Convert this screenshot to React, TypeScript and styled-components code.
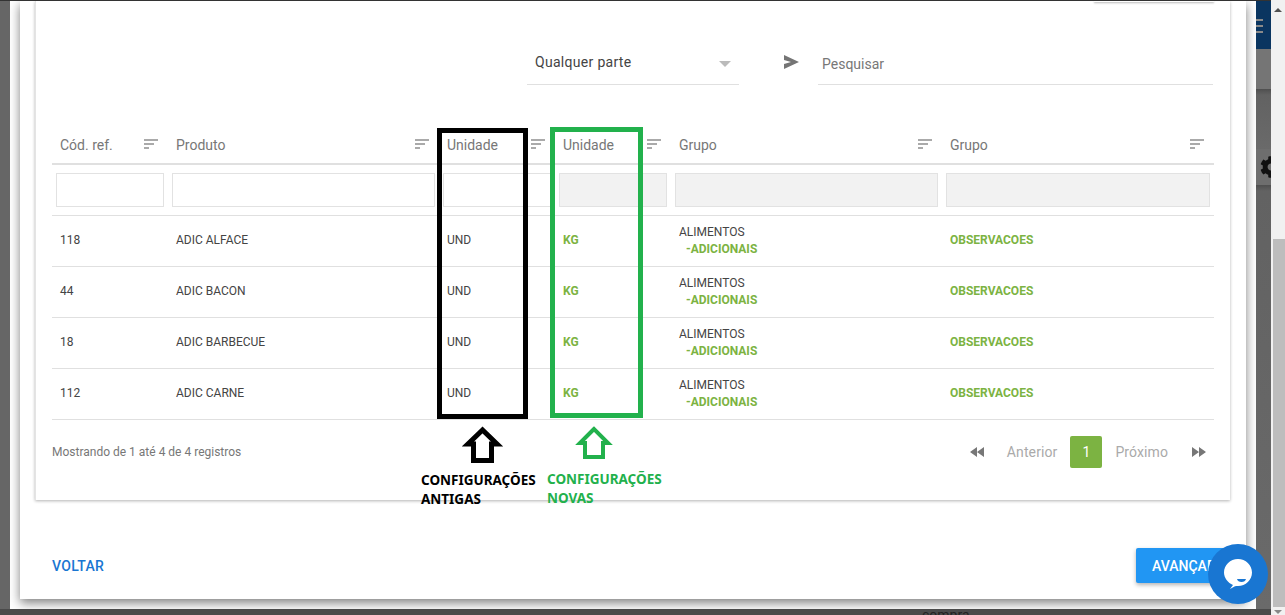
import React from 'react';
import styled, { createGlobalStyle } from 'styled-components';
import { FaCog } from 'react-icons/fa';

const GREEN = '#7cb342';
const LINE = '#e0e0e0';
const PAINT_GREEN = '#22b14c';
const COLUMNS = '116px 271px 116px 116px 271px 272px';

const GlobalStyle = createGlobalStyle`
    html, body {
        margin: 0;
        padding: 0;
        overflow: hidden;
        font-family: Roboto, 'Liberation Sans', sans-serif;
    }
`;

const Page = styled.div`
    position: relative;
    width: 1285px;
    height: 615px;
    display: flex;
    overflow: hidden;
    background: #666;
`;

const Main = styled.div`
    width: 1271px;
    display: flex;
    flex-direction: column;
    border-top: 1px solid #333;
`;

const Stage = styled.div`
    height: 608px;
    display: flex;
    padding-left: 10px;
`;

const Sheet = styled.div`
    width: 1246px;
    height: 608px;
    background: #fff;
    padding: 0 10px 10px;
    box-sizing: border-box;
    overflow: hidden;
`;

const Dialog = styled.div`
    width: 1226px;
    height: 598px;
    background: #fff;
    box-shadow: 0 4px 10px rgba(0, 0, 0, 0.5);
    padding: 0 16px 0 15px;
    box-sizing: border-box;
`;

const Card = styled.div`
    width: 1195px;
    height: 499px;
    padding: 0 16px;
    box-sizing: border-box;
    background: #fff;
    border-left: 1px solid #e4e4e4;
    box-shadow: 0 1px 3px rgba(0, 0, 0, 0.3);
    display: flex;
    flex-direction: column;
`;

const TopButtonEdge = styled.div`
    align-self: flex-end;
    width: 120px;
    height: 1px;
    background: #fff;
    box-shadow: 0 1px 2px rgba(0, 0, 0, 0.4);
`;

const SearchRow = styled.div`
    height: 83px;
    padding-right: 1px;
    display: flex;
    align-items: flex-end;
    justify-content: flex-end;
`;

const SelectBox = styled.div`
    width: 212px;
    height: 45px;
    padding: 0 8px;
    box-sizing: border-box;
    display: flex;
    align-items: center;
    justify-content: space-between;
    border-bottom: 1px solid ${LINE};
    font-size: 14px;
    letter-spacing: 0.3px;
    color: #444;
`;

const SelectCaret = styled.span`
    width: 0;
    height: 0;
    margin-top: 4px;
    border-left: 6px solid transparent;
    border-right: 6px solid transparent;
    border-top: 6px solid #bbb;
`;

const SendIcon = styled.svg`
    width: 15px;
    height: 14px;
    margin: 0 19px 16px 45px;
`;

const SearchField = styled.div`
    width: 395px;
    height: 44px;
    padding: 3px 4px 0;
    box-sizing: border-box;
    display: flex;
    align-items: center;
    border-bottom: 1px solid ${LINE};
    font-size: 14px;
    color: #777;
`;

const TableGrid = styled.div`
    display: grid;
    grid-template-columns: ${COLUMNS};
    margin-top: 40px;
`;

const HeadCell = styled.div`
    height: 40px;
    padding: 2px 10px 0 8px;
    display: flex;
    align-items: center;
    justify-content: space-between;
    box-sizing: border-box;
    border-bottom: 2px solid ${LINE};
    font-size: 14px;
    color: #777;
`;

const SortIcon = styled.svg`
    width: 14px;
    height: 10px;
    margin-top: -3px;
`;

const FilterCell = styled.div`
    height: 51px;
    padding: 8px 4px;
    box-sizing: border-box;
    border-bottom: 1px solid ${LINE};
`;

const FilterInput = styled.input`
    display: block;
    width: 100%;
    height: 34px;
    padding: 0;
    box-sizing: border-box;
    border: 1px solid #e2e2e2;
    border-radius: 0;
    background: ${props => (props.disabled ? '#f2f2f2' : '#fff')};
`;

const BodyCell = styled.div<{ $accent?: boolean }>`
    height: 51px;
    padding: 0 8px 2px;
    box-sizing: border-box;
    display: flex;
    flex-direction: column;
    justify-content: center;
    border-bottom: 1px solid ${LINE};
    font-size: 12px;
    color: ${props => (props.$accent ? GREEN : '#444')};
    font-weight: ${props => (props.$accent ? 700 : 400)};
`;

const GroupCell = styled(BodyCell)`
    padding-bottom: 0;
`;

const GroupLine = styled.span`
    line-height: 17px;
`;

const SubGroup = styled.span`
    line-height: 17px;
    padding-left: 7px;
    color: ${GREEN};
    font-weight: 700;
`;

const TableFooter = styled.div`
    display: flex;
    align-items: center;
    justify-content: space-between;
    height: 32px;
    margin-top: 16px;
`;

const RecordCount = styled.span`
    font-size: 12px;
    color: #777;
`;

const Pager = styled.div`
    display: flex;
    align-items: center;
    margin-right: 8px;
`;

const PagerArrow = styled.svg`
    width: 14px;
    height: 10px;
`;

const PagerLabel = styled.span<{ $after?: boolean }>`
    font-size: 14px;
    letter-spacing: 0.1px;
    color: #aaa;
    margin: ${props => (props.$after ? '0 24px 0 13px' : '0 13px 0 23px')};
`;

const PagerCurrent = styled.span`
    width: 32px;
    height: 32px;
    display: flex;
    align-items: center;
    justify-content: center;
    border-radius: 2px;
    background: ${GREEN};
    color: #fff;
    font-size: 14px;
`;

const DialogFooter = styled.div`
    display: flex;
    align-items: center;
    justify-content: space-between;
    height: 35px;
    margin-top: 48px;
    padding-left: 17px;
`;

const BackLink = styled.span`
    font-size: 14px;
    font-weight: 500;
    letter-spacing: 0.3px;
    color: #1976d2;
`;

const NextButton = styled.span`
    width: 94px;
    height: 35px;
    padding-left: 16px;
    box-sizing: border-box;
    display: flex;
    align-items: center;
    background: #2196f3;
    border-radius: 2px;
    box-shadow: 0 2px 4px rgba(0, 0, 0, 0.3);
    color: #fff;
    font-size: 14px;
    font-weight: 500;
`;

const SideStrip = styled.div`
    width: 15px;
    height: 608px;
    display: flex;
    flex-direction: column;
    overflow: hidden;
`;

const NavBlock = styled.div`
    height: 48px;
    padding-top: 18px;
    box-sizing: border-box;
    background: #0a3560;
    display: flex;
    flex-direction: column;
    gap: 4px;
`;

const NavBar = styled.span`
    width: 7px;
    height: 2px;
    background: #8a8a8a;
`;

const GreyBand = styled.div`
    height: 40px;
    background: #757575;
`;

const DarkBand = styled.div<{ $height: number }>`
    height: ${props => props.$height}px;
    background: linear-gradient(#4f4f4f, #626262 6px, #6a6a6a);
`;

const GearBand = styled.div`
    height: 36px;
    padding-left: 4px;
    display: flex;
    align-items: center;
    background: #6e6e6e;
    color: #111;
    font-size: 22px;
`;

const BottomStrip = styled.div`
    height: 6px;
    overflow: hidden;
    background: #4a4a4a;
    padding-left: 922px;
    font-size: 14px;
    line-height: 12px;
    color: #222;
`;

const Scrollbar = styled.div`
    width: 14px;
    height: 615px;
    padding-top: 239px;
    box-sizing: border-box;
    display: flex;
    flex-direction: column;
    align-items: flex-end;
    position: relative;
    background: #f1f1f1;
`;

const ScrollThumb = styled.div`
    width: 12px;
    height: 368px;
    background: #bdbdbd;
`;

const ScrollArrow = styled.span<{ $down?: boolean }>`
    position: absolute;
    right: 3px;
    ${props => (props.$down ? 'bottom: 1px;' : 'top: 8px;')}
    width: 0;
    height: 0;
    border-left: 4px solid transparent;
    border-right: 4px solid transparent;
    ${props => (props.$down ? 'border-top: 4px solid #888;' : 'border-bottom: 4px solid #505050;')}
`;

const Frame = styled.div<{ $left: number; $top: number; $width: number; $height: number; $color: string }>`
    position: absolute;
    left: ${props => props.$left}px;
    top: ${props => props.$top}px;
    width: ${props => props.$width}px;
    height: ${props => props.$height}px;
    box-sizing: border-box;
    border: 5px solid ${props => props.$color};
`;

const NoteArrow = styled.svg<{ $left: number; $top: number }>`
    position: absolute;
    left: ${props => props.$left}px;
    top: ${props => props.$top}px;
`;

const Note = styled.div<{ $left: number; $top: number; $color: string }>`
    position: absolute;
    left: ${props => props.$left}px;
    top: ${props => props.$top}px;
    font-family: 'Noto Sans', sans-serif;
    font-size: 13.5px;
    font-weight: 700;
    line-height: 19px;
    color: ${props => props.$color};
`;

const ChatBubble = styled.div`
    position: absolute;
    left: 1208px;
    top: 544px;
    width: 60px;
    height: 60px;
    border-radius: 50%;
    background: #1976d2;
    display: flex;
    align-items: center;
    justify-content: center;
`;

const ChatIcon = styled.svg`
    width: 30px;
    height: 32px;
`;

const headers = ['Cód. ref.', 'Produto', 'Unidade', 'Unidade', 'Grupo', 'Grupo'];

const rows = [
    { ref: '118', name: 'ADIC ALFACE' },
    { ref: '44', name: 'ADIC BACON' },
    { ref: '18', name: 'ADIC BARBECUE' },
    { ref: '112', name: 'ADIC CARNE' },
];

const Sort = () => (
    <SortIcon viewBox="0 0 14 10">
        <path fill="#aaa" d="M0 0h14v2H0zM0 4h10v2H0zM0 8h5v2H0z" />
    </SortIcon>
);

const App = () => (
    <Page>
        <GlobalStyle />
        <Main>
            <Stage>
                <Sheet>
                    <Dialog>
                        <Card>
                            <TopButtonEdge />
                            <SearchRow>
                                <SelectBox>
                                    Qualquer parte
                                    <SelectCaret />
                                </SelectBox>
                                <SendIcon viewBox="0 0 15 14">
                                    <path fill="#757575" d="M0 0l15 7-15 7V9l7-2-7-2z" />
                                </SendIcon>
                                <SearchField>Pesquisar</SearchField>
                            </SearchRow>
                            <TableGrid>
                                {headers.map((title, i) => (
                                    <HeadCell key={i}>
                                        {title}
                                        <Sort />
                                    </HeadCell>
                                ))}
                                {headers.map((title, i) => (
                                    <FilterCell key={i}>
                                        <FilterInput disabled={i > 2} />
                                    </FilterCell>
                                ))}
                                {rows.map(row => (
                                    <React.Fragment key={row.ref}>
                                        <BodyCell>{row.ref}</BodyCell>
                                        <BodyCell>{row.name}</BodyCell>
                                        <BodyCell>UND</BodyCell>
                                        <BodyCell $accent>KG</BodyCell>
                                        <GroupCell>
                                            <GroupLine>ALIMENTOS</GroupLine>
                                            <SubGroup>-ADICIONAIS</SubGroup>
                                        </GroupCell>
                                        <BodyCell $accent>OBSERVACOES</BodyCell>
                                    </React.Fragment>
                                ))}
                            </TableGrid>
                            <TableFooter>
                                <RecordCount>Mostrando de 1 até 4 de 4 registros</RecordCount>
                                <Pager>
                                    <PagerArrow viewBox="0 0 14 10">
                                        <path fill="#777" d="M7 0v10L0 5zM14 0v10L7 5z" />
                                    </PagerArrow>
                                    <PagerLabel>Anterior</PagerLabel>
                                    <PagerCurrent>1</PagerCurrent>
                                    <PagerLabel $after>Próximo</PagerLabel>
                                    <PagerArrow viewBox="0 0 14 10">
                                        <path fill="#777" d="M0 0v10l7-5zM7 0v10l7-5z" />
                                    </PagerArrow>
                                </Pager>
                            </TableFooter>
                        </Card>
                        <DialogFooter>
                            <BackLink>VOLTAR</BackLink>
                            <NextButton>AVANÇAR</NextButton>
                        </DialogFooter>
                    </Dialog>
                </Sheet>
                <SideStrip>
                    <NavBlock>
                        <NavBar />
                        <NavBar />
                        <NavBar />
                    </NavBlock>
                    <GreyBand />
                    <DarkBand $height={60} />
                    <GearBand>
                        <FaCog style={{ flexShrink: 0 }} />
                    </GearBand>
                    <DarkBand $height={424} />
                </SideStrip>
            </Stage>
            <BottomStrip>compra</BottomStrip>
        </Main>
        <Scrollbar>
            <ScrollArrow />
            <ScrollThumb />
            <ScrollArrow $down />
        </Scrollbar>

        <Frame $left={437} $top={128} $width={91} $height={291} $color="#000" />
        <Frame $left={550} $top={127} $width={93} $height={291} $color={PAINT_GREEN} />
        <NoteArrow $left={462} $top={426} width="42" height="37" viewBox="0 0 42 37">
            <path fill="none" stroke="#000" strokeWidth="5" d="M20.5 4L6 18h5.500v16.500h18V18H35z" />
        </NoteArrow>
        <NoteArrow $left={575} $top={426} width="38" height="33" viewBox="0 0 38 33">
            <path fill="none" stroke={PAINT_GREEN} strokeWidth="4" d="M19 3L5 17h5v14h18V17h5z" />
        </NoteArrow>
        <Note $left={421} $top={471} $color="#000">
            CONFIGURAÇÕES
            <br />
            ANTIGAS
        </Note>
        <Note $left={547} $top={470} $color={PAINT_GREEN}>
            CONFIGURAÇÕES
            <br />
            NOVAS
        </Note>
        <ChatBubble>
            <ChatIcon viewBox="0 0 30 32">
                <path
                    fill="#fff"
                    d="M15 1c7.700 0 14 6 14 13.500S22.700 28 15 28c-1 0-2 0-3 .3L7 31l3-4C5 25 1 20 1 14.500 1 7 7.300 1 15 1z"
                />
                <path fill="#1976d2" d="M14 21h9c-.5 2-2.200 3-4.500 3S14.500 23 14 21z" />
            </ChatIcon>
        </ChatBubble>
    </Page>
);

export default App;
